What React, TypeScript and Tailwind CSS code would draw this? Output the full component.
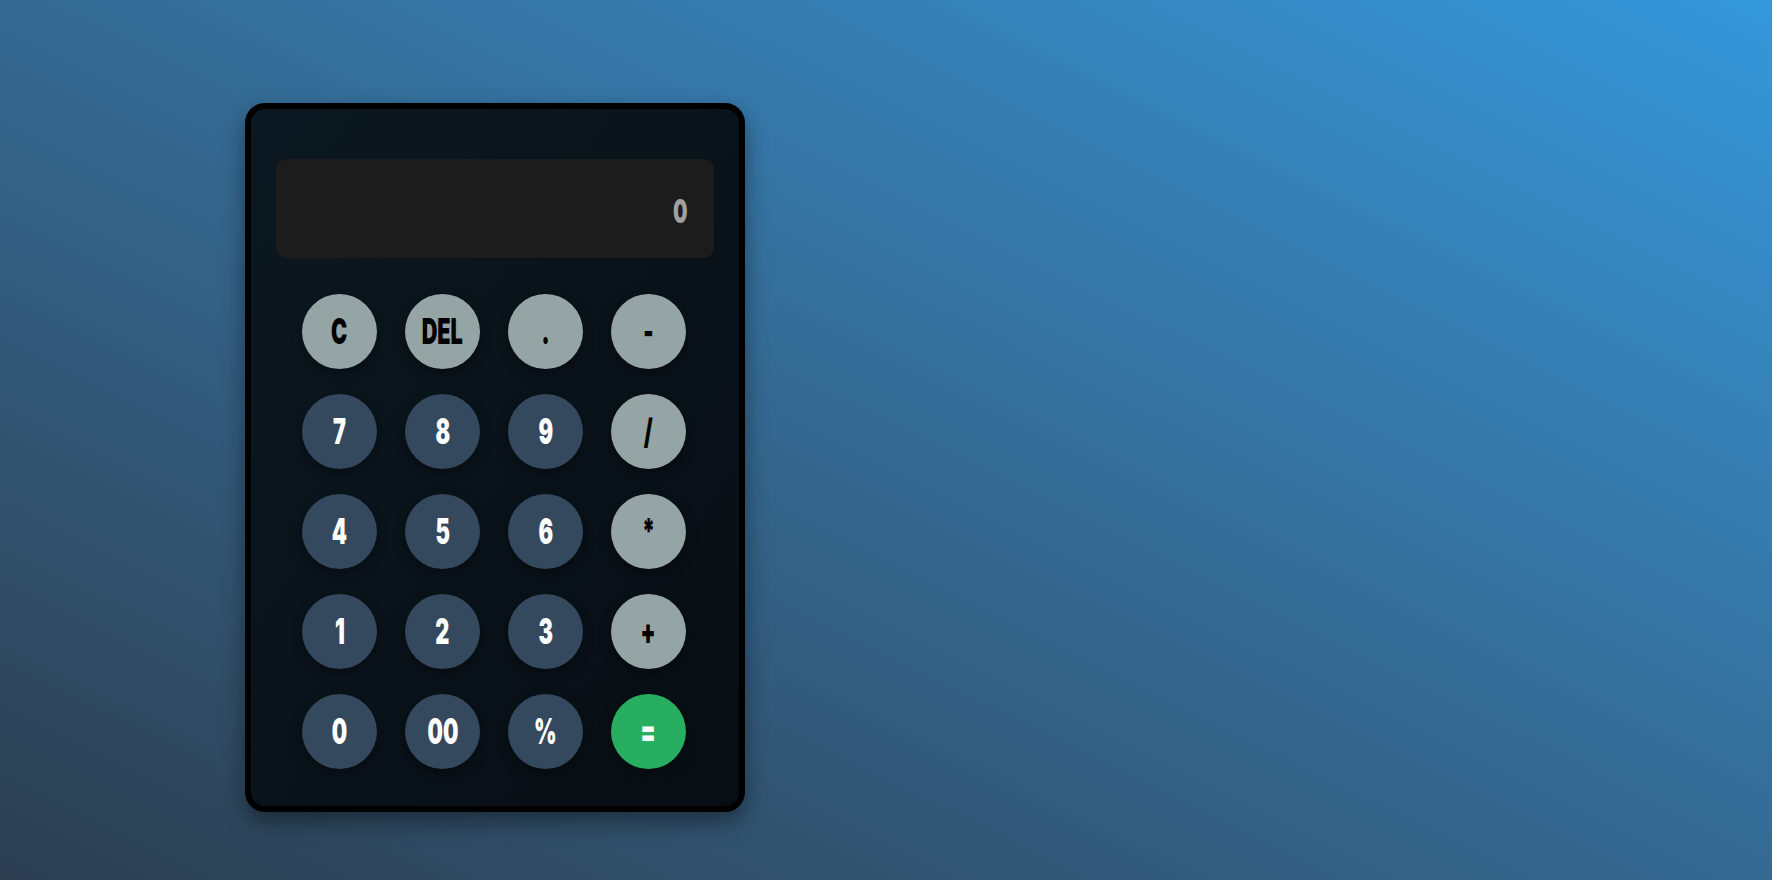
import React from "react";

type Key = { label: string; kind: "light" | "dark" | "green" };

const keys: Key[] = [
  { label: "C", kind: "light" },
  { label: "DEL", kind: "light" },
  { label: ".", kind: "light" },
  { label: "-", kind: "light" },
  { label: "7", kind: "dark" },
  { label: "8", kind: "dark" },
  { label: "9", kind: "dark" },
  { label: "/", kind: "light" },
  { label: "4", kind: "dark" },
  { label: "5", kind: "dark" },
  { label: "6", kind: "dark" },
  { label: "*", kind: "light" },
  { label: "1", kind: "dark" },
  { label: "2", kind: "dark" },
  { label: "3", kind: "dark" },
  { label: "+", kind: "light" },
  { label: "0", kind: "dark" },
  { label: "00", kind: "dark" },
  { label: "%", kind: "dark" },
  { label: "=", kind: "green" },
];

function KeyButton({ k }: { k: Key }) {
  const color =
    k.kind === "light"
      ? "bg-[#95a5a6] text-black"
      : k.kind === "dark"
      ? "bg-[#34495e] text-white"
      : "bg-[#27ae60] text-white";
  return (
    <button
      className={`w-[75px] h-[75px] rounded-full flex items-center justify-center shadow-[0_4px_12px_rgba(0,0,0,0.35)] ${color}`}
    >
      <span className="inline-block font-['Inter',sans-serif] font-black text-[35px] leading-none scale-x-[0.62]">
        {k.label}
      </span>
    </button>
  );
}

export default function App() {
  return (
    <div className="min-h-screen w-full bg-linear-to-tr from-[#2c3e50] to-[#3498db] pt-[103px] pl-[245px]">
      <div className="w-[500px] rounded-[20px] border-[6px] border-black bg-linear-to-br from-[#0c1821] to-[#070e13] px-[25px] pt-[50px] pb-[37px] shadow-[0_10px_22px_rgba(0,0,0,0.4)]">
        <div className="h-[99px] rounded-[10px] bg-[#1c1c1c] flex items-center justify-end pr-[27px]">
          <span className="inline-block mt-[5px] origin-right font-['Inter',sans-serif] font-black text-[33px] leading-none scale-x-[0.62] text-[#a0a0a0]">
            0
          </span>
        </div>
        <div className="mt-[36px] pl-[26px] grid grid-cols-[repeat(4,75px)] gap-x-[28px] gap-y-[25px] justify-start">
          {keys.map((k) => (
            <KeyButton key={k.label} k={k} />
          ))}
        </div>
      </div>
    </div>
  );
}
